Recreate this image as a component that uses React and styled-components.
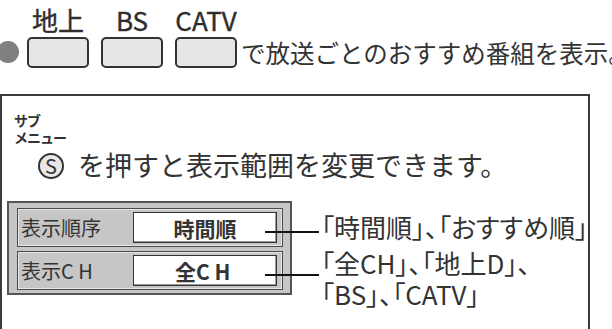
import styled, { createGlobalStyle } from "styled-components";

const GlobalStyle = createGlobalStyle`
  html, body {
    margin: 0;
    padding: 0;
    background: #ffffff;
  }
  body {
    font-family: "Noto Sans CJK JP", "Noto Sans", sans-serif;
    color: #333333;
  }
`;

const Page = styled.div`
  width: 612px;
  height: 329px;
  overflow: hidden;
  box-sizing: border-box;
  padding-top: 6px;
`;

const Intro = styled.div`
  display: flex;
  align-items: flex-end;
  white-space: nowrap;
`;

const Bullet = styled.div`
  flex: 0 0 22px;
  width: 22px;
  height: 22px;
  border-radius: 50%;
  background: #808080;
  margin: 0 8px 5px -3px;
`;

const KeyGroup = styled.div`
  flex: none;
  display: flex;
  gap: 12px;
`;

const Key = styled.div`
  display: flex;
  flex-direction: column;
  align-items: center;
`;

const KeyLabel = styled.span`
  font-size: 26px;
  line-height: 28px;
  margin-bottom: 3px;
  color: #2e2e2e;
  -webkit-text-stroke: 0.4px #2e2e2e;
`;

const KeyCap = styled.span`
  display: block;
  box-sizing: border-box;
  width: 62px;
  height: 31px;
  border: 2px solid #333333;
  border-radius: 5px;
  background: #e6e6e6;
`;

const IntroText = styled.span`
  font-size: 24.5px;
  line-height: 30px;
  margin-left: 4px;
`;

const Frame = styled.section`
  box-sizing: border-box;
  width: 590px;
  height: 260px;
  margin-top: 26px;
  border: 2px solid #3a3a3a;
  border-bottom: none;
  padding: 16px 0 0 12px;
`;

const SubMenuTag = styled.div`
  font-size: 14px;
  line-height: 17px;
  font-weight: 700;
  letter-spacing: -1px;
  color: #333333;
`;

const Instruction = styled.p`
  height: 30px;
  margin: 4px 0 0 24px;
  font-size: 27px;
  line-height: 30px;
  white-space: nowrap;
`;

const SKey = styled.span`
  display: inline-flex;
  align-items: center;
  justify-content: center;
  vertical-align: 2px;
  box-sizing: border-box;
  width: 26px;
  height: 26px;
  margin-right: 14px;
  border-radius: 50%;
  border: 2px solid #333333;
  background: #e8e8e8;
  font-size: 20px;
  line-height: 1;
`;

const Diagram = styled.div`
  display: flex;
  align-items: flex-start;
  margin: 21px 0 0 -7px;
`;

const Panel = styled.div`
  flex: none;
  box-sizing: border-box;
  width: 285px;
  display: flex;
  flex-direction: column;
  gap: 4px;
  padding: 5px 7px 3px 8px;
  border: 2px solid #555555;
  background: #c6c6c6;
`;

const Row = styled.div`
  box-sizing: border-box;
  height: 39px;
  display: flex;
  align-items: center;
  justify-content: space-between;
  padding: 0 5px 0 3px;
  border: 1.5px solid #4a4a4a;
  box-shadow: inset 1px 1px 0 #e6e6e6, inset -1px -1px 0 #e6e6e6;
`;

const RowLabel = styled.span`
  font-size: 20px;
  line-height: 24px;
  color: #333333;
`;

const Wide = styled.span`
  letter-spacing: 0.22em;
`;

const Value = styled.span`
  position: relative;
  box-sizing: border-box;
  width: 144px;
  height: 31px;
  display: flex;
  align-items: center;
  justify-content: center;
  background: #ffffff;
  border: 1.5px solid #333333;
  box-shadow: inset -1px -1px 0 #9a9a9a;
  font-size: 21px;
  font-weight: 700;
  color: #333333;
`;

const Leader = styled.span`
  position: absolute;
  left: calc(100% - 11px);
  top: calc(50% + 3px);
  width: ${(p) => p.$length}px;
  height: 2px;
  background: #111111;
`;

const Notes = styled.div`
  display: flex;
  flex-direction: column;
  gap: 5px;
  margin: 10px 0 0 29px;
`;

const Note = styled.p`
  margin: 0;
  font-size: 26px;
  line-height: 31px;
  font-feature-settings: "palt";
  white-space: nowrap;
  color: #333333;
`;

const keys = ["地上", "BS", "CATV"];

const App = () => (
  <Page>
    <GlobalStyle />
    <Intro>
      <Bullet />
      <KeyGroup>
        {keys.map((k) => (
          <Key key={k}>
            <KeyLabel>{k}</KeyLabel>
            <KeyCap />
          </Key>
        ))}
      </KeyGroup>
      <IntroText>で放送ごとのおすすめ番組を表示。</IntroText>
    </Intro>
    <Frame>
      <SubMenuTag>
        サブ
        <br />
        メニュー
      </SubMenuTag>
      <Instruction>
        <SKey>S</SKey>
        を押すと表示範囲を変更できます。
      </Instruction>
      <Diagram>
        <Panel>
          <Row>
            <RowLabel>表示順序</RowLabel>
            <Value>
              時間順
              <Leader $length={54} />
            </Value>
          </Row>
          <Row>
            <RowLabel>
              表示<Wide>CH</Wide>
            </RowLabel>
            <Value>
              全<Wide>CH</Wide>
              <Leader $length={54} />
            </Value>
          </Row>
        </Panel>
        <Notes>
          <Note>「時間順」、「おすすめ順」</Note>
          <Note>
            「全CH」、「地上D」、
            <br />
            「BS」、「CATV」
          </Note>
        </Notes>
      </Diagram>
    </Frame>
  </Page>
);

export default App;
